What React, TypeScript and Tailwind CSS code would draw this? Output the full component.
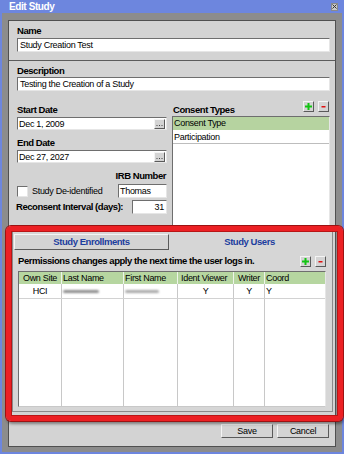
import React from 'react';

const field =
  'bg-white border border-t-[#6e6e6e] border-l-[#6e6e6e] border-r-[#e6e6e6] border-b-[#e6e6e6]';
const raised =
  'bg-[#d4d4d4] border border-t-[#f4f4f4] border-l-[#f4f4f4] border-r-[#5a5a5a] border-b-[#5a5a5a]';
const label = 'font-bold text-[9.5px] tracking-[-0.45px] leading-[10px] whitespace-nowrap';

function PlusMinus() {
  return (
    <div className="flex gap-[4px]">
      <div className={`${raised} w-[11px] h-[11px] flex items-center justify-center`}>
        <svg width="7" height="7" viewBox="0 0 7 7">
          <rect x="2.5" y="0" width="2" height="7" fill="#13c413" />
          <rect x="0" y="2.5" width="7" height="2" fill="#13c413" />
        </svg>
      </div>
      <div className={`${raised} w-[11px] h-[11px] flex items-center justify-center`}>
        <svg width="5" height="5" viewBox="0 0 5 5">
          <rect x="0.5" y="2" width="4" height="1.5" fill="#e01010" />
        </svg>
      </div>
    </div>
  );
}

function DateInput({ value }: { value: string }) {
  return (
    <div className={`${field} h-[13px] mt-[2px] flex items-center pl-[1px]`}>
      <span className="flex-1 leading-[10px]">{value}</span>
      <div className={`${raised} w-[11px] h-[10px] mr-[1px] flex items-center justify-center`}>
        <svg width="7" height="6" viewBox="0 0 7 6">
          <rect x="0.5" y="4" width="1" height="1" fill="#444" />
          <rect x="3" y="4" width="1" height="1" fill="#444" />
          <rect x="5.5" y="4" width="1" height="1" fill="#444" />
        </svg>
      </div>
    </div>
  );
}

export default function App() {
  const cols = 'grid grid-cols-[43px_62px_54px_56px_31px_1fr]';

  return (
    <div className="relative w-[344px] h-[454px] bg-[#6d86de] flex flex-col font-['Liberation_Sans',Arial,sans-serif] text-[9px] tracking-[-0.3px] text-black whitespace-nowrap">
      {/* title bar */}
      <div className="h-[13px] flex items-center justify-between pl-[9px] pr-[6px]">
        <span className="text-white font-bold text-[10px] tracking-[-0.4px] leading-[12px]">Edit Study</span>
        <div className="w-[7px] h-[8px] bg-[#c8c8c8] border border-[#8a8a8a] flex items-center justify-center">
          <svg width="5" height="5" viewBox="0 0 5 5">
            <path d="M0.5 0.5 L4.5 4.5 M4.5 0.5 L0.5 4.5" stroke="#333" strokeWidth="1" />
          </svg>
        </div>
      </div>

      {/* window frame */}
      <div className="flex-1 mx-[2px] mb-[2px] bg-[#8c8c8c] pt-[7px] px-[6px] pb-[5px] flex">
        <div className="flex-1 bg-[#d3d3d3] border border-[#505050] flex flex-col">
          {/* Name */}
          <div className="pl-[8px] pr-[5px] pt-[5px] pb-[8px] border-b border-[#5c5c5c]">
            <div className={label}>Name</div>
            <div className={`${field} h-[14px] mt-[2px] pl-[2px] leading-[12px]`}>Study Creation Test</div>
          </div>

          {/* Description */}
          <div className="pl-[8px] pr-[5px] pt-[5px]">
            <div className={label}>Description</div>
            <div className={`${field} h-[14px] mt-[1px] pl-[2px] leading-[12px]`}>Testing the Creation of a Study</div>
          </div>

          {/* two columns */}
          <div className="flex h-[135px] overflow-hidden">
            <div className="w-[150px] ml-[8px] flex flex-col">
              <div className={`mt-[14px] ${label}`}>Start Date</div>
              <DateInput value="Dec 1, 2009" />
              <div className={`mt-[8px] ${label}`}>End Date</div>
              <DateInput value="Dec 27, 2027" />
              <div className={`mt-[8px] ${label} text-right pr-[1px]`}>IRB Number</div>
              <div className="mt-[2px] h-[15px] flex items-center">
                <div className={`${field} w-[11px] h-[11px] mt-[2px]`} />
                <span className="ml-[4px] flex-1 leading-[10px] mt-[1px]">Study De-identified</span>
                <div className={`${field} w-[49px] h-[14px] pl-[1px] leading-[12px]`}>Thomas</div>
              </div>
              <div className="mt-[2px] h-[14px] flex items-center">
                <span className={`flex-1 ${label} -ml-[1px]`}>Reconsent Interval (days):</span>
                <div className={`${field} w-[35px] h-[14px] pr-[2px] text-right leading-[12px]`}>31</div>
              </div>
            </div>

            <div className="w-[158px] ml-[5px] flex flex-col">
              <div className="mt-[10px] h-[14px] flex items-start justify-between pr-[1px]">
                <span className={`mt-[4px] ${label} ml-[1px]`}>Consent Types</span>
                <PlusMinus />
              </div>
              <div className={`${field} mt-[1px] h-[110px] flex flex-col`}>
                <div className="h-[13px] bg-[#b6d3a0] pl-[1px] leading-[13px]">Consent Type</div>
                <div className="h-[14px] pl-[1px] leading-[14px] border-b border-[#bdbdbd]">Participation</div>
              </div>
            </div>
          </div>

          {/* enrollments / users */}
          <div className="mt-[3px] ml-[3px] mr-[2px] h-[183px] border border-[#8a8a8a] bg-[#d6d6d6] flex flex-col">
            <div className="mt-[4px] ml-[1px] mr-[2px] h-[16px] flex">
              <div className={`${raised} w-[155px] flex items-center justify-center text-[#1b3d9e] ${label}`}>
                Study Enrollments
              </div>
              <div className={`flex-1 flex items-center justify-center text-[#1b3d9e] ${label}`}>
                Study Users
              </div>
            </div>
            <div className="mt-[4px] h-[14px] flex items-center justify-between pl-[5px] pr-[6px]">
              <span className={label}>Permissions changes apply the next time the user logs in.</span>
              <PlusMinus />
            </div>
            <div className="mt-[3px] ml-[5px] mr-[6px] h-[136px] bg-white border border-t-[#6e6e6e] border-l-[#6e6e6e] border-r-[#e6e6e6] border-b-[#c8c8c8] flex flex-col">
              <div className={`${cols} h-[12px] bg-[#b6d6a0] leading-[12px]`}>
                <div className="text-center border-r border-[#eef4ea]">Own Site</div>
                <div className="pl-[1px] border-r border-[#eef4ea]">Last Name</div>
                <div className="pl-[1px] border-r border-[#eef4ea]">First Name</div>
                <div className="pl-[3px] border-r border-[#eef4ea]">Ident Viewer</div>
                <div className="text-center border-r border-[#eef4ea]">Writer</div>
                <div className="pl-[1px]">Coord</div>
              </div>
              <div className={`${cols} h-[15px] leading-[14px] border-b border-[#d2d2d2]`}>
                <div className="text-center border-r border-[#c8c8c8]">HCI</div>
                <div className="border-r border-[#c8c8c8] flex items-center pl-[1px]">
                  <div className="w-[36px] h-[3px] bg-[#8c8c8c] blur-[1px] rounded-full" />
                </div>
                <div className="border-r border-[#c8c8c8] flex items-center pl-[1px]">
                  <div className="w-[34px] h-[3px] bg-[#a8a8a8] blur-[1px] rounded-full" />
                </div>
                <div className="text-center border-r border-[#c8c8c8]">Y</div>
                <div className="text-center border-r border-[#c8c8c8]">Y</div>
                <div className="pl-[1px]">Y</div>
              </div>
              <div className={`${cols} flex-1`}>
                <div className="border-r border-[#c8c8c8]" />
                <div className="border-r border-[#c8c8c8]" />
                <div className="border-r border-[#c8c8c8]" />
                <div className="border-r border-[#c8c8c8]" />
                <div className="border-r border-[#c8c8c8]" />
                <div />
              </div>
            </div>
          </div>

          {/* buttons */}
          <div className="mt-[12px] flex justify-end gap-[4px] pr-[6px]">
            <div className={`${raised} w-[52px] h-[14px] flex items-center justify-center leading-[12px]`}>Save</div>
            <div className={`${raised} w-[52px] h-[14px] flex items-center justify-center leading-[12px]`}>Cancel</div>
          </div>
        </div>
      </div>

      {/* red highlight annotation */}
      <div className="absolute left-[6px] top-[226px] w-[337px] h-[195px] rounded-[5px] border-[5px] border-[#ec2024] shadow-[0_0_0_1px_#9c1212,1px_3px_3px_rgba(0,0,0,0.4),inset_0_0_0_1px_#b81616]" />
    </div>
  );
}
